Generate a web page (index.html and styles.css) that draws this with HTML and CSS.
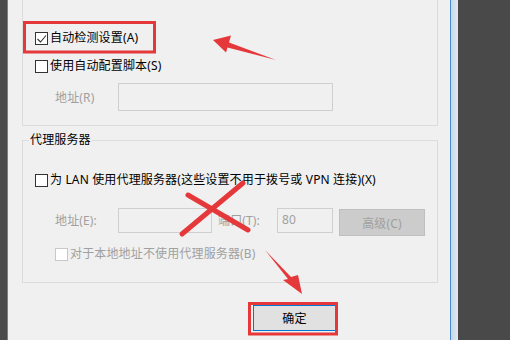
FILE: index.html
```html
<!DOCTYPE HTML>
<html lang="zh-CN">
  <head>
    <title>局域网(LAN)设置</title>
    <meta charset="utf-8">
    <link rel="stylesheet" href="styles.css">
  </head>
  <body>

  <div class="desk">
    <div class="edge-left"></div>

    <div class="dialog">
      <div class="group group-top">
        <label class="check-row">
          <span class="box">
            <svg width="11" height="11" viewBox="0 0 11 11"><path d="M1.5 6 L4.5 9 L10 2.5" fill="none" stroke="#333" stroke-width="1.1"/></svg>
          </span>
          自动检测设置(A)
        </label>
        <label class="check-row gap">
          <span class="box"></span>
          使用自动配置脚本(S)
        </label>
        <div class="field-row">
          <span class="field-label disabled">地址(R)</span>
          <span class="input input-script"></span>
        </div>
      </div>

      <fieldset class="group group-proxy">
        <legend>代理服务器</legend>
        <div class="group-body">
          <label class="check-row">
            <span class="box"></span>
            为 LAN 使用代理服务器(这些设置不用于拨号或 VPN 连接)(X)
          </label>
          <div class="field-row proxy-row">
            <span class="field-label disabled">地址(E):</span>
            <span class="input input-addr"></span>
            <span class="port-label disabled">端口(T):</span>
            <span class="input input-port">80</span>
            <span class="btn btn-disabled">高级(C)</span>
          </div>
          <label class="check-row bypass disabled">
            <span class="box box-disabled"></span>
            对于本地地址不使用代理服务器(B)
          </label>
        </div>
      </fieldset>

      <div class="actions">
        <span class="btn btn-default">确定</span>
      </div>
    </div>

    <div class="shadow-right"></div>
    <div class="edge-right"></div>
  </div>

  <!-- annotations drawn on top of the screenshot -->
  <svg class="marks" width="510" height="340" viewBox="0 0 510 340">
    <rect x="24.5" y="22.5" width="130" height="29.5" fill="none" stroke="#e5383b" stroke-width="3"/>
    <rect x="249.5" y="303.5" width="87" height="30.5" fill="none" stroke="#e5383b" stroke-width="3"/>
    <polygon points="213,40 231,35.5 229,42.5 276,60 227.5,47.5 226,52.5" fill="#e5383b"/>
    <polygon points="265,250 291,277 298,275 302,294 283,280 288,279" fill="#e5383b"/>
    <path d="M188 195 L248 230" stroke="#e5383b" stroke-width="5" stroke-linecap="round"/>
    <path d="M243 183 L182 234" stroke="#e5383b" stroke-width="5" stroke-linecap="round"/>
  </svg>

  </body>
</html>
```

FILE: styles.css
```css
html {
  height: 100%;
}
body {
  margin: 0;
  padding: 0;
  width: 510px;
  height: 340px;
  overflow: hidden;
  position: relative;
  background: #494949;
  color: #000;
  font-family: "Noto Sans", "Noto Sans CJK SC", sans-serif;
  font-size: 12px;
  letter-spacing: 0.15px;
}

.desk {
  display: flex;
  height: 340px;
}

.edge-left {
  width: 7px;
  background: #4b4b4b;
}

.dialog {
  width: 444px;
  box-sizing: border-box;
  background: #f0f0f0;
  border-left: 1px solid #4a8bd0;
  border-right: 1px solid #4a8bd0;
  padding: 0 12px 0 14px;
}

.shadow-right {
  width: 7px;
  background: linear-gradient(to right, #c6d8ea, #dfe8f1);
}

.edge-right {
  flex: 1;
  background: #494949;
}

/* group boxes */
.group {
  border: 1px solid #dcdcdc;
}

.group-top {
  border-top: none;
  padding: 29px 0 14px 12px;
}

.group-proxy {
  margin: 6px 0 0;
  padding: 0;
  min-width: 0;
}

.group-proxy legend {
  margin-left: 6px;
  padding: 0 1px;
  line-height: 16px;
}

.group-body {
  padding: 23px 0 19px 12px;
}

/* checkboxes */
.check-row {
  display: flex;
  align-items: center;
  height: 18px;
  line-height: 18px;
  white-space: nowrap;
}

.check-row.gap {
  margin-top: 10px;
}

.box {
  width: 13px;
  height: 13px;
  box-sizing: border-box;
  border: 1px solid #333;
  background: #fff;
  margin-right: 2px;
  display: flex;
  align-items: center;
  justify-content: center;
}

.box-disabled {
  border-color: #c8c8c8;
}

.bypass {
  margin-top: 9px;
  padding-left: 20px;
}

.disabled {
  color: #a0a0a0;
}

/* address rows */
.field-row {
  display: flex;
  align-items: center;
  margin-top: 8px;
  height: 28px;
}

.field-label {
  width: 83px;
  box-sizing: border-box;
  padding-left: 20px;
}

.input {
  box-sizing: border-box;
  border: 1px solid #cfcfcf;
  background: #f0f0f0;
}

.input-script {
  width: 215px;
  height: 28px;
}

.proxy-row {
  margin-top: 19px;
  align-items: flex-start;
}

.proxy-row .field-label,
.port-label {
  line-height: 25px;
}

.input-addr {
  width: 94px;
  height: 25px;
}

.port-label {
  width: 65px;
  box-sizing: border-box;
  padding-left: 6px;
}

.input-port {
  width: 56px;
  height: 25px;
  padding-left: 4px;
  line-height: 22px;
  color: #a0a0a0;
}

/* buttons */
.btn {
  display: flex;
  align-items: center;
  justify-content: center;
  box-sizing: border-box;
}

.btn-disabled {
  width: 86px;
  height: 27px;
  margin: 1px 0 0 6px;
  background: #cccccc;
  border: 1px solid #bfbfbf;
  color: #a0a0a0;
}

.actions {
  display: flex;
  margin-top: 22px;
  padding-left: 231px;
}

.btn-default {
  width: 83px;
  height: 26px;
  background: #e1e1e1;
  border: 1px solid #0078d7;
}

.marks {
  position: absolute;
  top: 0;
  left: 0;
  pointer-events: none;
}
```
